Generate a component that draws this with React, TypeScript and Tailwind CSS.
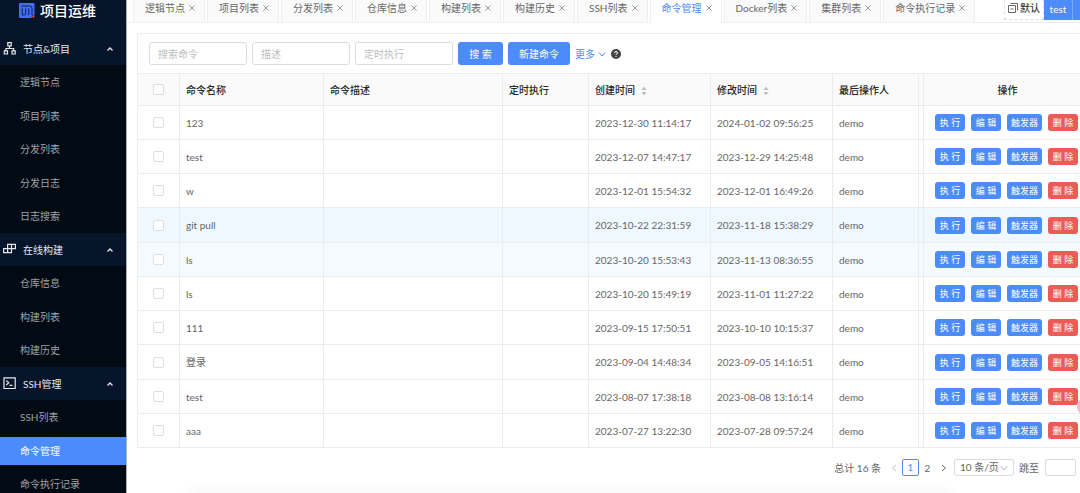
import { useState } from "react";
import type { ReactNode } from "react";

const groups = [
  { title: "节点&项目", icon: "node", items: ["逻辑节点", "项目列表", "分发列表", "分发日志", "日志搜索"] },
  { title: "在线构建", icon: "build", items: ["仓库信息", "构建列表", "构建历史"] },
  { title: "SSH管理", icon: "ssh", items: ["SSH列表", "命令管理", "命令执行记录"] },
];

const tabs = ["逻辑节点", "项目列表", "分发列表", "仓库信息", "构建列表", "构建历史", "SSH列表", "命令管理", "Docker列表", "集群列表", "命令执行记录"];

const rows = [
  ["123", "2023-12-30 11:14:17", "2024-01-02 09:56:25"],
  ["test", "2023-12-07 14:47:17", "2023-12-29 14:25:48"],
  ["w", "2023-12-01 15:54:32", "2023-12-01 16:49:26"],
  ["git pull", "2023-10-22 22:31:59", "2023-11-18 15:38:29"],
  ["ls", "2023-10-20 15:53:43", "2023-11-13 08:36:55"],
  ["ls", "2023-10-20 15:49:19", "2023-11-01 11:27:22"],
  ["111", "2023-09-15 17:50:51", "2023-10-10 10:15:37"],
  ["登录", "2023-09-04 14:48:34", "2023-09-05 14:16:51"],
  ["test", "2023-08-07 17:38:18", "2023-08-08 13:16:14"],
  ["aaa", "2023-07-27 13:22:30", "2023-07-28 09:57:24"],
];

function GroupIcon({ name }: { name: string }) {
  return (
    <svg viewBox="0 0 13 13" className="size-[13px] shrink-0" fill="none" stroke="#e6e8eb" strokeWidth="1.2" aria-hidden="true">
      {name === "node" && <path d="M4.8 .7h3.4v3.2H4.8zM1.3 8.8h3.2V12H1.3zM9 8.8h3.2V12H9zM6.5 3.9v2.6M2.9 8.8V6.5h7.7v2.3" />}
      {name === "build" && <path d="M4.6 1.3h7.8v4.4H4.6zM8.5 1.3v4.4M.6 5.7h7.9v4H.6zM4.6 5.7v4" />}
      {name === "ssh" && <path d="M1 .8h11.2v10.7H1zM3.2 3.6l2.6 2.2-2.6 2.2M6.5 8.3h3" />}
    </svg>
  );
}

function Logo() {
  return (
    <svg viewBox="0 0 16 16" className="size-4" aria-hidden="true">
      <rect width="15.5" height="15" rx=".8" fill="#456bfa" />
      <path
        d="M2.2 3h8.3q2.5 0 2.5 2.500V12M3.200 5.300V12h2.300q1.200 0 1.200-1.200V5.300M9.800 5.300v5.500q0 1.200-1.200 1.200"
        fill="none"
        stroke="#0c1d55"
      />
      <circle cx="14.200" cy="13.800" r="1.500" fill="#061529" />
      <circle cx="14.200" cy="13.800" r="1" fill="#e4572e" />
    </svg>
  );
}

function Chevron({ d, className }: { d: string; className: string }) {
  return (
    <svg viewBox="0 0 8 8" className={className} fill="none" stroke="currentColor" aria-hidden="true">
      <path d={d} />
    </svg>
  );
}

function Sorter() {
  return (
    <svg viewBox="0 0 6 10" className="ml-[6px] mt-0.5 h-[10px] w-[6px]" fill="#bfbfbf" aria-hidden="true">
      <path d="M3 .8 5.7 4H.3zM3 9.2.3 6h5.4z" />
    </svg>
  );
}

function Check({ label }: { label: string }) {
  return (
    <input
      type="checkbox"
      aria-label={label}
      className="mx-auto block size-[11px] appearance-none rounded-[2px] border border-[#dedede] bg-white checked:border-[#4c8bfa] checked:bg-[#4c8bfa]"
    />
  );
}

function Action({ children, danger }: { children: ReactNode; danger?: boolean }) {
  return (
    <button
      type="button"
      className={`h-[17px] min-w-[30px] shrink-0 rounded-[3px] px-[4px] text-[9px] leading-[17px] text-white ${danger ? "bg-[#ec5b56]" : "bg-[#4c8bfa]"}`}
    >
      {children}
    </button>
  );
}

const cell = "border-b border-r border-[#ececec] px-[6px]";
const field = "h-[23px] w-[98px] rounded-[3px] border border-[#dcdcdc] bg-white px-[8px] text-[10px] text-[#555] outline-none placeholder:text-[#bdbdbd]";

export default function App() {
  const [current, setCurrent] = useState("命令管理");
  return (
    <div className="relative flex h-screen overflow-hidden bg-white font-['Lato','Noto_Sans_CJK_SC',sans-serif] text-[10px] leading-4 text-[#666]">
      <aside className="w-[127px] shrink-0 overflow-hidden border-r border-[#a9adb3] bg-[#020a14]">
        <div className="flex h-[32px] items-start gap-[5px] bg-[#061529] pl-[19px] pt-[3px]">
          <Logo />
          <h1 className="text-[14px] font-medium leading-4 text-white">项目运维</h1>
        </div>
        <nav>
          {groups.map((group) => (
            <section key={group.title}>
              <button type="button" className="flex h-[33px] w-full items-center gap-[7px] bg-[#061529] pl-[3px] pr-[12px] text-[#e6e8eb]">
                <GroupIcon name={group.icon} />
                <span className="flex-1 text-left">{group.title}</span>
                <Chevron d="M1.5 5.5 4 3l2.5 2.5" className="size-[8px] stroke-[1.3]" />
              </button>
              <ul>
                {group.items.map((item) => (
                  <li key={item} className="flex items-center odd:h-[34px] even:h-[33px]">
                    <a
                      href="#"
                      onClick={() => setCurrent(item)}
                      className={`block h-[28px] w-full pl-[20px] leading-[28px] ${item === current ? "bg-[#4c8bfa] text-white" : "text-[#a0a3a8]"}`}
                    >
                      {item}
                    </a>
                  </li>
                ))}
              </ul>
            </section>
          ))}
        </nav>
      </aside>

      <main className="min-w-0 flex-1">
        <header className="flex h-[23px] items-start border-b border-[#efefef] pl-[6px]">
          <div className="flex h-[23px] min-w-0 flex-1 gap-[2px]" role="tablist">
            {tabs.map((tab) => (
              <div
                key={tab}
                className={`flex shrink-0 items-start gap-[4px] border-x pl-[11px] pr-[9px] ${tab === current ? "border-[#efefef] bg-white text-[#4c8bfa]" : "border-b border-[#efefef] bg-[#fafafa]"}`}
              >
                <button type="button" role="tab" aria-selected={tab === current} className="h-4">{tab}</button>
                <button type="button" aria-label={`关闭 ${tab}`} className="flex h-4 items-center text-[#777]">
                  <Chevron d="M.5 .5l7 7M7.5 .5l-7 7" className="size-[6px]" />
                </button>
              </div>
            ))}
          </div>
          <button type="button" className="flex h-[20px] w-[40px] shrink-0 items-start justify-center gap-[2px] border border-t-0 border-dashed border-[#dedede] font-medium text-[#444]">
            <svg viewBox="0 0 10 10" className="mt-[3px] size-[10px]" fill="none" stroke="#666" aria-hidden="true">
              <path d="M2.5 .5h7v7M.5 2.5h7v7h-7zM2.5 6h3" />
            </svg>
            默认
          </button>
          <button type="button" className="h-[20px] w-[28px] shrink-0 bg-[#4c8bfa] pb-[3px] text-white">test</button>
          <span className="h-[20px] w-[8px] shrink-0 border-l border-[#7aabff] bg-[#4c8bfa]" />
        </header>

        <section className="ml-[10px] mt-[10px] border-l border-t border-[#efefef]">
          <form className="flex h-[39px] items-center gap-[5px] pl-[11px]" onSubmit={(e) => e.preventDefault()}>
            <input aria-label="搜索命令" placeholder="搜索命令" className={field} />
            <input aria-label="描述" placeholder="描述" className={field} />
            <input aria-label="定时执行" placeholder="定时执行" className={field} />
            <button type="submit" className="h-[23px] w-[45px] rounded-[3px] bg-[#4c8bfa] text-white">搜 索</button>
            <button type="button" className="h-[23px] w-[62px] rounded-[3px] bg-[#4c8bfa] text-white">新建命令</button>
            <button type="button" className="flex items-center gap-[3px] text-[#4c8bfa]">
              更多
              <Chevron d="M1 2.5 4 6l3-3.5" className="size-[8px]" />
            </button>
            <svg viewBox="0 0 10 10" className="size-[10px]" role="img" aria-label="帮助">
              <circle cx="5" cy="5" r="5" fill="#444" />
              <path d="M3.5 4q0-1.5 1.5-1.5T6.5 4Q6.5 4.8 5 5.4V6M5 7v1" fill="none" stroke="#fff" strokeWidth="1" />
            </svg>
          </form>
          <table className="w-full table-fixed border-separate border-spacing-0 border-t border-[#ececec]">
            <colgroup>
              <col className="w-[42px]" />
              <col className="w-[144px]" />
              <col className="w-[179px]" />
              <col className="w-[86px]" />
              <col className="w-[122px]" />
              <col className="w-[122px]" />
              <col className="w-[86px]" />
              <col className="w-[5px]" />
              <col />
            </colgroup>
            <thead>
              <tr className="h-[32px] bg-[#fafafa] text-left text-[#262626] [&>th]:font-medium">
                <th className={cell}><Check label="全选" /></th>
                <th className={cell}>命令名称</th>
                <th className={cell}>命令描述</th>
                <th className={cell}>定时执行</th>
                <th className={cell}><span className="flex items-center">创建时间<Sorter /></span></th>
                <th className={cell}><span className="flex items-center">修改时间<Sorter /></span></th>
                <th className={cell}>最后操作人</th>
                <th className="border-b border-r border-[#ececec] p-0" />
                <th className="border-b border-[#ececec] pl-[11px] text-center">操作</th>
              </tr>
            </thead>
            <tbody>
              {rows.map(([name, created, updated], i) => (
                <tr key={created} className={`h-[34px] nth-[4n]:h-[35px] ${i === 3 ? "bg-[#f0f8ff]" : i === 4 ? "bg-[#f5faff]" : ""}`}>
                  <td className={cell}><Check label={`选择 ${name}`} /></td>
                  <td className={cell}>{name}</td>
                  <td className={cell} />
                  <td className={cell} />
                  <td className={`${cell} whitespace-nowrap`}>{created}</td>
                  <td className={`${cell} whitespace-nowrap`}>{updated}</td>
                  <td className={cell}>demo</td>
                  <td className="border-b border-r border-[#ececec] p-0" />
                  <td className="border-b border-[#ececec] py-0 pl-[11px]">
                    <div className="flex gap-[6px]">
                      <Action>执 行</Action>
                      <Action>编 辑</Action>
                      <Action>触发器</Action>
                      <Action danger>删 除</Action>
                    </div>
                  </td>
                </tr>
              ))}
            </tbody>
          </table>
        </section>

        <nav aria-label="分页" className="mt-[11px] flex items-center justify-end pr-[4px]">
          <span className="mr-[9px]">总计 16 条</span>
          <button type="button" aria-label="上一页" className="text-[#c4c4c4]"><Chevron d="M6 1 2.5 4 6 7" className="size-[8px]" /></button>
          <button type="button" className="ml-[4px] h-[17px] w-[17px] rounded-[2px] border border-[#4c8bfa] leading-[15px] text-[#4c8bfa]">1</button>
          <button type="button" className="h-[17px] w-[17px]">2</button>
          <button type="button" aria-label="下一页" className="ml-[4px]"><Chevron d="M2 1l3.5 3L2 7" className="size-[8px]" /></button>
          <span className="ml-[6px] grid items-center rounded-[2px] border border-[#dcdcdc]">
            <select aria-label="每页条数" className="col-start-1 row-start-1 h-[15px] w-[58px] appearance-none bg-transparent pl-[5px] leading-[15px]">
              <option>10 条/页</option>
            </select>
            <Chevron d="M.8 2 4 6l3.2-4" className="pointer-events-none col-start-1 row-start-1 mr-[5px] size-[8px] justify-self-end text-[#bdbdbd]" />
          </span>
          <label className="ml-[5px] flex items-center gap-[6px]">
            跳至
            <input className="h-[17px] w-[31px] rounded-[2px] border border-[#dcdcdc] px-1 outline-none" />
          </label>
        </nav>
      </main>

      <span className="pointer-events-none absolute -right-[16px] bottom-[77px] size-[19px] rounded-full bg-[#f3a6c8]/80" />
      <span className="pointer-events-none absolute -bottom-3 left-[190px] right-[130px] h-2 shadow-[0_0_16px_rgba(0,0,0,0.12)]" />
    </div>
  );
}
